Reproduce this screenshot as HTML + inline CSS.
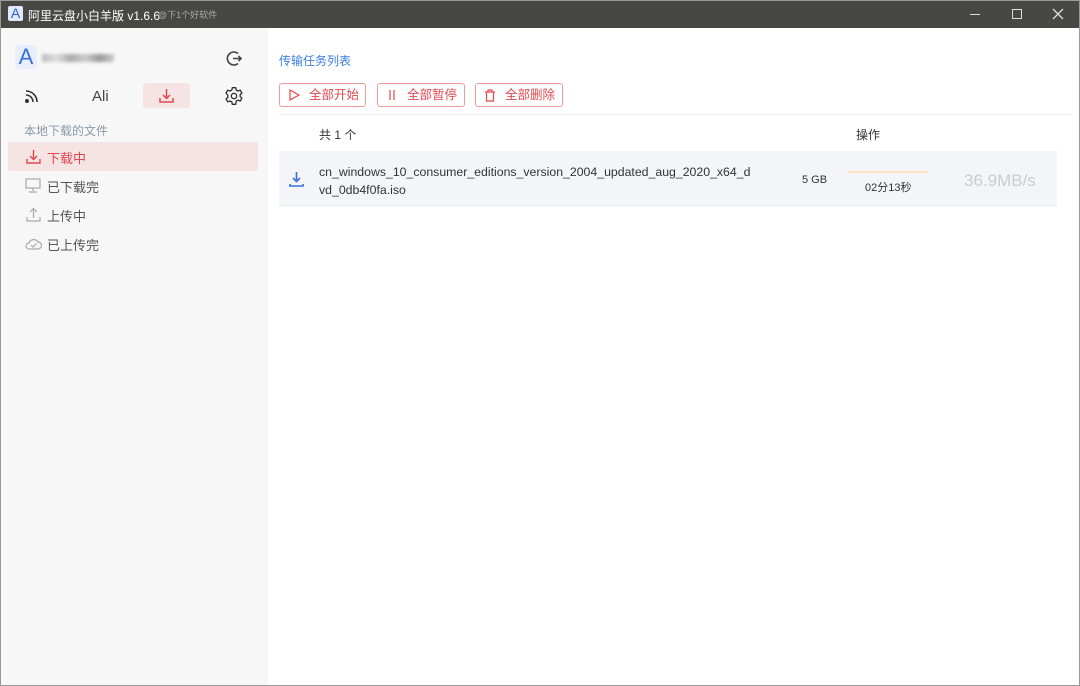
<!DOCTYPE html>
<html><head><meta charset="utf-8"><style>
*{margin:0;padding:0;box-sizing:border-box}
body{width:1080px;height:686px;overflow:hidden;font-family:"Liberation Sans","Noto Sans CJK SC",sans-serif;background:#fff;position:relative}
.t{position:absolute;white-space:nowrap}
#tb{position:absolute;left:0;top:0;width:1080px;height:28px;background:#474744;color:#fff}
#side{position:absolute;left:0;top:28px;width:268px;height:658px;background:#f7f7f7}
.btn{position:absolute;top:83px;height:24px;border:1px solid #ef9a9a;border-radius:3px;color:#e0484f;font-size:12.5px;line-height:22px}
.btn span{position:absolute;left:29px;top:0}
#frame{position:absolute;left:0;top:0;width:1080px;height:686px;border:1px solid #999;pointer-events:none}
</style></head><body>
<div id="tb">
 <div class="t" style="left:8px;top:6px;width:15px;height:15px;background:#dfe9fb;border-radius:2px;color:#2f5fd0;font-size:14px;line-height:15px;text-align:center">A</div>
 <div class="t" style="left:28px;top:7px;font-size:12px;color:#fff">阿里云盘小白羊版 v1.6.6</div>
 <div class="t" style="left:158px;top:8px;font-size:9px;color:#aaa">@下1个好软件</div>
 <div class="t" style="left:970px;top:14px;width:10px;height:1px;background:#ddd"></div>
 <div class="t" style="left:1012px;top:9px;width:10px;height:10px;border:1px solid #ddd"></div>
 <svg class="t" style="left:1052px;top:8px" width="12" height="12"><path d="M1 1L11 11M11 1L1 11" stroke="#ddd" stroke-width="1.3"/></svg>
</div>
<div id="side">
 <div class="t" style="left:15px;top:17px;width:22px;height:24px;background:#e8eefb;border-radius:3px;color:#3a6fdc;font-size:22px;line-height:24px;text-align:center">A</div>
 <div class="t" style="left:42px;top:26px;width:72px;height:8px;background:linear-gradient(90deg,#bbb,#ddd,#aaa,#ccc,#999,#ccc);filter:blur(1.5px)"></div>
 <svg class="t" style="left:226px;top:22px" width="17" height="17" fill="none" stroke="#444" stroke-width="1.6"><path d="M12 3.5A6.5 6.5 0 1 0 12 13.5"/><path d="M7 8.5H15M12.5 6L15 8.5 12.5 11"/></svg>
 <svg class="t" style="left:25px;top:61px" width="14" height="14" fill="none" stroke="#333" stroke-width="1.6"><path d="M1 2A11 11 0 0 1 12 13M1 6A7 7 0 0 1 8 13"/><circle cx="2" cy="12" r="1.2" fill="#333"/></svg>
 <div class="t" style="left:92px;top:60px;font-size:15px;color:#444">Ali</div>
 <div class="t" style="left:143px;top:55px;width:47px;height:25px;background:#f6e4e4;border-radius:3px"></div>
 <svg class="t" style="left:159px;top:60px" width="15" height="15" fill="none" stroke="#e0484f" stroke-width="1.5"><path d="M7.5 1V10M4 7l3.5 3.5L11 7M1 10v4h13v-4"/></svg>
 <svg class="t" style="left:224px;top:58px" width="20" height="20" viewBox="0 0 24 24" fill="none" stroke="#333" stroke-width="1.6"><circle cx="12" cy="12" r="3.2"/><path d="M10 2h4l.6 2.8 2.2 1.2 2.7-1 2 3.4-2.1 1.9v2.4l2.1 1.9-2 3.4-2.7-1-2.2 1.2L14 22h-4l-.6-2.8-2.2-1.2-2.7 1-2-3.4 2.1-1.9v-2.4L2.5 8.4l2-3.4 2.7 1 2.2-1.2z"/></svg>
 <div class="t" style="left:24px;top:94px;font-size:12px;color:#8b9aa8">本地下载的文件</div>
 <div class="t" style="left:8px;top:114px;width:250px;height:29px;background:#f6e4e4;border-radius:2px"></div>
 <svg class="t" style="left:26px;top:121px" width="15" height="15" fill="none" stroke="#e0484f" stroke-width="1.4"><path d="M7.5 1V10M4 7l3.5 3.5L11 7M1 10v4h13v-4"/></svg>
 <div class="t" style="left:47px;top:120px;font-size:13px;color:#e0484f">下载中</div>
 <svg class="t" style="left:25px;top:150px" width="16" height="15" fill="none" stroke="#aaa" stroke-width="1.2"><rect x="1" y="1" width="14" height="9"/><path d="M8 10v3M4 14h8"/></svg>
 <div class="t" style="left:47px;top:149px;font-size:13px;color:#555">已下载完</div>
 <svg class="t" style="left:26px;top:179px" width="15" height="15" fill="none" stroke="#aaa" stroke-width="1.2"><path d="M7.5 11V2M4 5l3.5-3.5L11 5M1 10v4h13v-4"/></svg>
 <div class="t" style="left:47px;top:178px;font-size:13px;color:#555">上传中</div>
 <svg class="t" style="left:25px;top:209px" width="17" height="13" fill="none" stroke="#aaa" stroke-width="1.2"><path d="M4 12A3 3 0 0 1 4 6 5 5 0 0 1 13 5 3.5 3.5 0 0 1 13 12z"/><path d="M6 8l2 2 3.5-3.5"/></svg>
 <div class="t" style="left:47px;top:207px;font-size:13px;color:#555">已上传完</div>
</div>
<div class="t" style="left:279px;top:52px;font-size:12px;color:#3b7fe0">传输任务列表</div>
<div class="btn" style="left:279px;width:87px"><svg class="t" style="left:8px;top:5px" width="12" height="12" fill="none" stroke="#e0484f" stroke-width="1.2"><path d="M2 1L11 6 2 11z"/></svg><span>全部开始</span></div>
<div class="btn" style="left:377px;width:88px"><svg class="t" style="left:10px;top:6px" width="8" height="10" stroke="#e0484f" stroke-width="1.2"><path d="M2 0V10M6 0V10"/></svg><span>全部暂停</span></div>
<div class="btn" style="left:475px;width:88px"><svg class="t" style="left:8px;top:5px" width="12" height="13" fill="none" stroke="#e0484f" stroke-width="1.2"><path d="M1 3H11M4 3V1H8V3M2.5 3V12H9.5V3"/></svg><span>全部删除</span></div>
<div class="t" style="left:279px;top:114px;width:793px;height:1px;background:#eee"></div>
<div class="t" style="left:319px;top:126px;font-size:12px;color:#333">共 1 个</div>
<div class="t" style="left:856px;top:126px;font-size:12px;color:#333">操作</div>
<div class="t" style="left:279px;top:151px;width:778px;height:55px;background:#f3f5f8;border-bottom:1px solid #e8eaee"></div>
<svg class="t" style="left:289px;top:171px" width="15" height="16" fill="none" stroke="#3b6fe0" stroke-width="1.6"><path d="M7.5 1V10M4 7l3.5 3.5L11 7M1 13v2h13v-2"/></svg>
<div class="t" style="left:319px;top:163px;font-size:12.3px;color:#333;line-height:18px">cn_windows_10_consumer_editions_version_2004_updated_aug_2020_x64_d<br>vd_0db4f0fa.iso</div>
<div class="t" style="left:802px;top:174px;font-size:11px;color:#333">5 GB</div>
<div class="t" style="left:847px;top:171px;width:81px;height:2px;background:#fde4c8"></div>
<div class="t" style="left:865px;top:179px;font-size:11px;color:#333">02分13秒</div>
<div class="t" style="left:964px;top:171px;font-size:17px;color:#ccc">36.9MB/s</div>
<div id="frame"></div>
</body></html>
